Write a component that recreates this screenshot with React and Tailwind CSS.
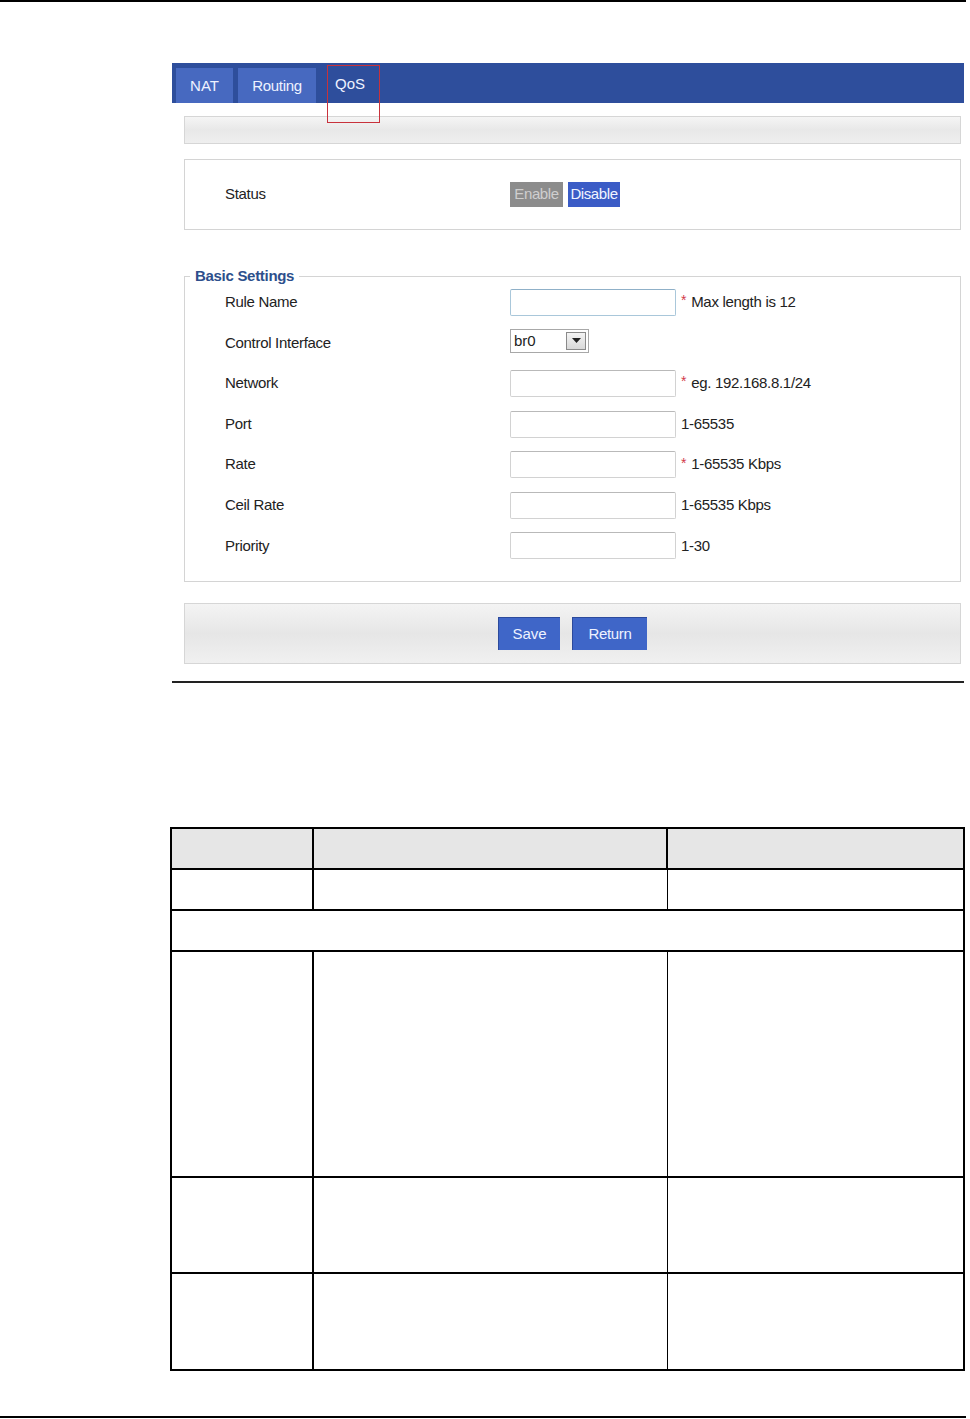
import React from "react";

const font = { fontFamily: '"Liberation Sans", Arial, sans-serif' };

function Field({ label, children, note, star }) {
  return (
    <div className="flex items-center h-[40.6px]">
      <div className="w-[325px] pl-[40px] text-[15px] text-[#222] tracking-[-0.3px]">{label}</div>
      {children}
      {note && (
        <div className="flex items-center ml-[5px] text-[15px] text-[#222] tracking-[-0.3px]">
          {star && <span className="text-[#d23a4a] mr-[5px] text-[14px] -mt-[3px]">*</span>}
          <span>{note}</span>
        </div>
      )}
    </div>
  );
}

function TextBox({ focus }) {
  return (
    <div
      className={
        "w-[166px] h-[27px] rounded-[2px] border bg-white " +
        (focus ? "border-[#a9c7da] border-t-[#8fb0c8]" : "border-[#d2d2d2] border-t-[#b9b9b9]")
      }
    />
  );
}

export default function App() {
  return (
    <div className="relative w-[970px] h-[1419px] bg-white overflow-hidden" style={font}>
      <div className="h-[2px] w-[966px] bg-black" />

      {/* screenshot panel */}
      <div className="relative ml-[172px] mt-[61px] w-[792px]">
        <div className="h-[40px] bg-[#2e4e9c] flex items-end pl-[4px] gap-[5px]">
          <div className="w-[57px] h-[35px] bg-[#4769c0] text-[#eef2ff] text-[15px] flex items-center justify-center pt-[2px]">NAT</div>
          <div className="w-[78px] h-[35px] bg-[#4769c0] text-[#eef2ff] text-[15px] flex items-center justify-center tracking-[-0.3px] pt-[2px]">Routing</div>
          <div className="w-[58px] h-[35px] text-[#eef2ff] text-[15px] flex items-center justify-center pb-[2px]">QoS</div>
        </div>
        <div className="absolute left-[155px] top-[2px] w-[53px] h-[58px] border-[1.5px] border-[#c8323c]" />

        <div className="pl-[12px] pr-[3px]">
          <div className="mt-[13px] h-[28px] border border-[#d6d6d6] bg-gradient-to-b from-[#f5f5f5] via-[#e8e8e8] to-[#efefef]" />

          <div className="mt-[15px] h-[71px] border border-[#d4d4d4] flex items-center">
            <div className="w-[325px] pl-[40px] text-[15px] text-[#222] tracking-[-0.3px]">Status</div>
            <div className="flex gap-[5px]">
              <div className="w-[53px] h-[25px] bg-[#8c8c8c] text-[#cfcfcf] text-[15px] flex items-center justify-center tracking-[-0.4px]">Enable</div>
              <div className="w-[52px] h-[25px] bg-[#3b5cc6] text-[#f0f4ff] text-[15px] flex items-center justify-center tracking-[-0.4px]">Disable</div>
            </div>
          </div>

          <fieldset className="mt-[37px] border border-[#d4d4d4] pb-[15px] min-w-0">
            <legend className="ml-[5px] px-[5px] text-[15px] font-bold text-[#2d4f8c] tracking-[-0.3px] leading-[18px]">Basic Settings</legend>
            <div className="-mt-[3px]">
              <Field label="Rule Name" note="Max length is 12" star>
                <TextBox focus />
              </Field>
              <Field label="Control Interface">
                <div className="w-[79px] h-[24px] border border-[#a8a8a8] bg-white flex items-center justify-between pl-[3px] pr-[2px] -mt-[3px]">
                  <span className="text-[15px] text-[#222]">br0</span>
                  <div className="w-[20px] h-[18px] border border-[#8a8a8a] bg-gradient-to-b from-[#f4f4f4] to-[#d8d8d8] flex items-center justify-center">
                    <svg width="9" height="6" viewBox="0 0 9 6"><path d="M0 0h9L4.5 5z" fill="#222" /></svg>
                  </div>
                </div>
              </Field>
              <Field label="Network" note="eg. 192.168.8.1/24" star>
                <TextBox />
              </Field>
              <Field label="Port" note="1-65535">
                <TextBox />
              </Field>
              <Field label="Rate" note="1-65535 Kbps" star>
                <TextBox />
              </Field>
              <Field label="Ceil Rate" note="1-65535 Kbps">
                <TextBox />
              </Field>
              <Field label="Priority" note="1-30">
                <TextBox />
              </Field>
            </div>
          </fieldset>

          <div className="mt-[21px] h-[61px] border border-[#d6d6d6] bg-gradient-to-b from-[#f4f4f4] via-[#e6e6e6] to-[#f0f0f0] flex items-center justify-center gap-[12px]">
            <div className="w-[62px] h-[33px] bg-[#3f66c8] text-[#eef2ff] text-[15px] flex items-center justify-center border-l border-t border-[#2c4a9c]">Save</div>
            <div className="w-[75px] h-[33px] bg-[#3f66c8] text-[#eef2ff] text-[15px] flex items-center justify-center border-l border-t border-[#2c4a9c] tracking-[-0.3px]">Return</div>
          </div>
        </div>

        <div className="mt-[17px] h-[2px] bg-[#222]" />
      </div>

      {/* table */}
      <table className="ml-[170px] mt-[144px] w-[793px] border-collapse table-fixed">
        <colgroup>
          <col className="w-[142px]" />
          <col className="w-[354px]" />
          <col className="w-[297px]" />
        </colgroup>
        <tbody>
          <tr className="h-[41px] bg-[#e6e6e6]">
            <td className="border-2 border-black" />
            <td className="border-2 border-black" />
            <td className="border-2 border-black" />
          </tr>
          <tr className="h-[41px]">
            <td className="border-2 border-black" />
            <td className="border-2 border-black border-r" />
            <td className="border-2 border-black border-l" />
          </tr>
          <tr className="h-[41px]">
            <td colSpan={3} className="border-2 border-black" />
          </tr>
          <tr className="h-[226px]">
            <td className="border-2 border-black" />
            <td className="border-2 border-black border-r" />
            <td className="border-2 border-black border-l" />
          </tr>
          <tr className="h-[96px]">
            <td className="border-2 border-black" />
            <td className="border-2 border-black border-r" />
            <td className="border-2 border-black border-l" />
          </tr>
          <tr className="h-[97px]">
            <td className="border-2 border-black" />
            <td className="border-2 border-black border-r" />
            <td className="border-2 border-black border-l" />
          </tr>
        </tbody>
      </table>

      <div className="absolute left-0 top-[1416px] h-[2px] w-[966px] bg-black" />
    </div>
  );
}
